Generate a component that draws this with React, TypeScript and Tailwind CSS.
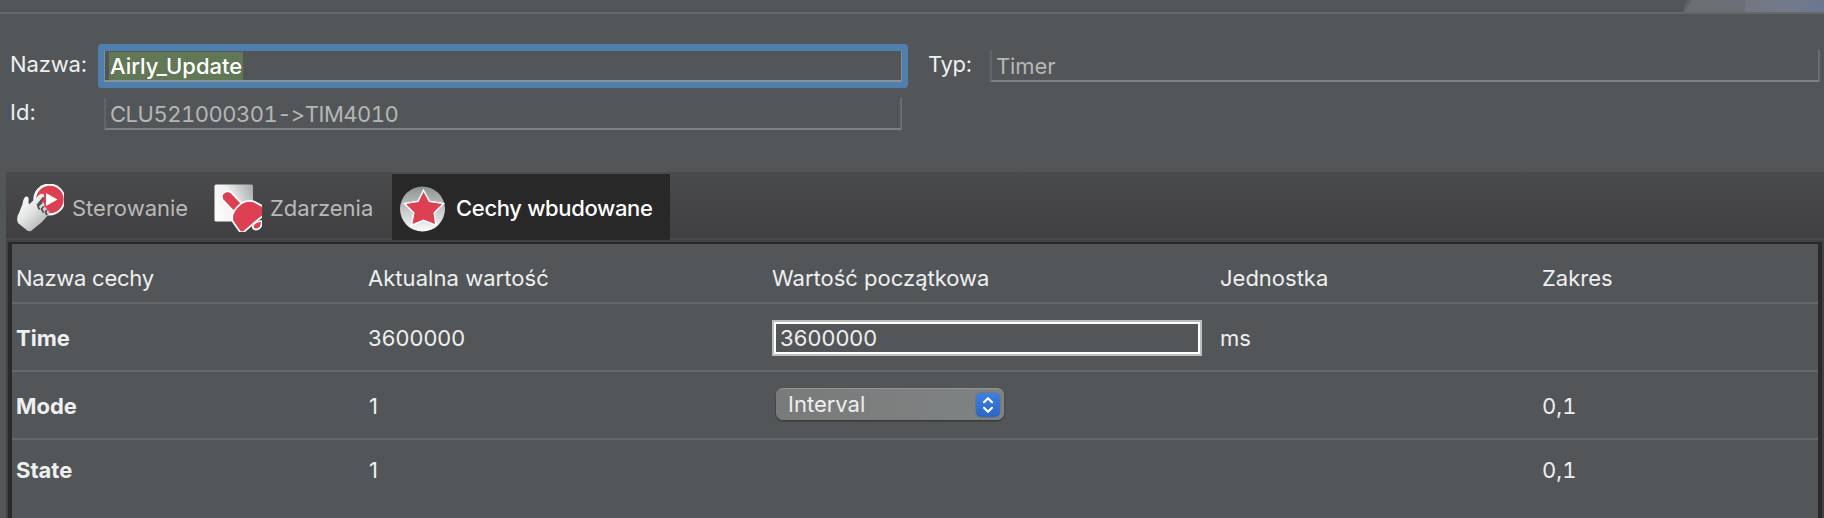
import React from "react";

function ControlIcon() {
  return (
    <svg width="52" height="52" viewBox="0 0 52 52" className="shrink-0">
      <defs>
        <linearGradient id="hand" x1="0" y1="0" x2="0.8" y2="1">
          <stop offset="0" stopColor="#ffffff" />
          <stop offset="0.5" stopColor="#e4e6e5" />
          <stop offset="1" stopColor="#a9adac" />
        </linearGradient>
        <clipPath id="controlClip">
          <rect x="0" y="2" width="50" height="50" />
        </clipPath>
      </defs>
      <g clipPath="url(#controlClip)">
        <circle cx="35.300" cy="17.500" r="16" fill="#fff" />
        <circle cx="35.800" cy="17.500" r="13.800" fill="#dc4052" />
        <path d="M32 11v13l11.500-6.500z" fill="#fff" />
        <path
          d="M3.500 34 L5 31 L8.500 22 Q9.500 15 12 14.500 Q15.500 14 14.500 20 L15 22.500 L25 13 Q28.500 10.500 30 13 Q30.500 14.500 28 17.500 L23.500 24 L27 21 Q29.500 19.500 30.500 22 L30 25 Q32.500 25 33 28 Q36 28.500 35 32 L28 40 L17 49 Q14 50 12 47.500 L4 41 Q2.500 38 3.500 34Z"
          fill="url(#hand)"
        />
        <path
          d="M29.500 15.500 L23 23.500 M28 20.500 L24 24.500 L25.500 27.500 M29.500 24.500 L27.500 27 L29.500 30.500 M32.500 28 L31.500 30.500 L33 33"
          stroke="#4d4f51"
          strokeWidth="1.700"
          fill="none"
        />
      </g>
    </svg>
  );
}

function EventIcon() {
  return (
    <svg width="52" height="52" viewBox="0 0 52 52" className="shrink-0">
      <defs>
        <linearGradient id="sheet" x1="0" y1="0.600" x2="1" y2="0.200">
          <stop offset="0" stopColor="#fbfbfb" />
          <stop offset="0.450" stopColor="#efefef" />
          <stop offset="1" stopColor="#abb0af" />
        </linearGradient>
        <clipPath id="eventClip">
          <rect x="0" y="2" width="50" height="48" />
        </clipPath>
      </defs>
      <g clipPath="url(#eventClip)">
        <rect x="2.500" y="2.500" width="38.500" height="37" rx="1.500" fill="url(#sheet)" />
        <g fill="#dc4052" stroke="#fff" strokeWidth="3.600" strokeLinejoin="round" paintOrder="stroke">
          <path d="M10.500 13.500 Q12 10.500 15.500 10 L18.500 11 L28.500 21.500 L21.500 28 L11 17Z" />
          <path d="M29.500 22.300 Q36 18.500 42 20.500 L52 26 L52 32 L43 39 L31 49.500 L28.500 49 L21.500 39 Q19 31 29.500 22.300Z" />
          <path d="M49 40 Q43.500 40 41.500 44.500 Q42 47 45 46.500 Q49 45 49 40Z" />
        </g>
      </g>
    </svg>
  );
}

function StarIcon() {
  return (
    <svg width="48" height="48" viewBox="0 0 48 48" className="shrink-0">
      <defs>
        <linearGradient id="disc" x1="0" y1="0" x2="0" y2="1">
          <stop offset="0" stopColor="#8d9392" />
          <stop offset="0.500" stopColor="#c3c6c5" />
          <stop offset="1" stopColor="#fbfbfb" />
        </linearGradient>
      </defs>
      <circle cx="24.500" cy="25" r="22.500" fill="url(#disc)" />
      <path
        d="M25.500 8 L31 18 L44 20 L35.500 28.500 L37 40 L25.500 35.500 L14.500 40 L16.500 28.500 L8 20 L20.500 18Z"
        fill="#dc4052"
        stroke="#fff"
        strokeWidth="3"
        paintOrder="stroke"
      />
    </svg>
  );
}

type TabProps = {
  label: string;
  icon: React.ReactNode;
  active?: boolean;
  className: string;
};

function Tab({ label, icon, active, className }: TabProps) {
  return (
    <button
      className={`flex items-start pt-[10px] ${className} ${
        active ? "bg-[#282828] font-medium tracking-[-0.34px] text-white" : "text-[#b9b9ba]"
      }`}
    >
      {icon}
      <span className={active ? "mt-[10px]" : "mt-[12px]"}>{label}</span>
    </button>
  );
}

type Row = {
  name: string;
  value: string;
  initial?: React.ReactNode;
  unit?: string;
  range?: string;
};

const rows: Row[] = [
  {
    name: "Time",
    value: "3600000",
    unit: "ms",
    initial: (
      <div className="-mt-1 h-9 w-[430px] border-2 border-[#bdbebe]">
        <div className="h-8 border-2 border-white pl-[4px] tracking-[0.1px]">3600000</div>
      </div>
    ),
  },
  {
    name: "Mode",
    value: "1",
    range: "0,1",
    initial: (
      <div className="-mt-1 ml-1 flex h-8 w-[228px] items-center justify-between rounded-[7px] border-t border-[#939595] bg-linear-to-r from-[#797b7b] to-[#808383] pr-1 pl-3 shadow-[0_1px_2px_rgba(0,0,0,0.45)]">
        <span className="-mt-px">Interval</span>
        <span className="flex size-6 items-center justify-center rounded-[5px] bg-linear-to-b from-[#3d7fe3] to-[#2c67c4] shadow-[0_0_2px_rgba(0,0,0,0.3)]">
          <svg width="12" height="18" viewBox="0 0 12 18" fill="none" stroke="#fff" strokeWidth="2.200" strokeLinecap="round" strokeLinejoin="round">
            <path d="M2 6.200 6 2.200l4 4M2 11.800l4 4 4-4" />
          </svg>
        </span>
      </div>
    ),
  },
  { name: "State", value: "1", range: "0,1" },
];

const columns = "grid grid-cols-[352px_404px_448px_322px_1fr] pl-1";

export default function App() {
  return (
    <div className="flex h-[518px] w-[1824px] flex-col overflow-hidden bg-[#525658] font-['Inter',sans-serif] text-[22px] leading-7 whitespace-nowrap text-[#eeefef] [font-feature-settings:'calt'_0]">
      <div className="flex h-[14px] shrink-0 justify-end border-b-2 border-[#656868]">
        <svg width="140" height="12" viewBox="0 0 140 12">
          <defs>
            <linearGradient id="sky" x1="0" y1="0" x2="1" y2="0">
              <stop offset="0" stopColor="#6b6f71" />
              <stop offset="0.430" stopColor="#6b6e76" />
              <stop offset="0.440" stopColor="#757780" />
              <stop offset="0.800" stopColor="#717a8c" />
              <stop offset="1" stopColor="#6b7690" />
            </linearGradient>
          </defs>
          <path d="M0 12V8L3 0h6v12z" fill="#606466" />
          <path d="M0 12 8 0h132v12z" fill="url(#sky)" />
        </svg>
      </div>

      <div className="grid shrink-0 grid-cols-[94px_798px_88px_830px] gap-y-4 pt-9 pl-[10px]">
        <label className="tracking-[-0.15px]">Nazwa:</label>
        <div className="h-8 rounded-[1px] border-t border-r border-b-2 border-l border-t-[#4f80ad] border-r-[#8a8c8d] border-b-[#8a9299] border-l-[#858c92] pl-[5px] text-white shadow-[0_0_0_6px_#4f80ad]">
          <span className="-ml-px mt-px inline-block h-7 bg-[#617756] px-px font-medium">Airly_Update</span>
        </div>
        <label className="pl-[26px] tracking-[-0.3px]">Typ:</label>
        <div className="h-8 border-r-2 border-b-2 border-l-2 border-r-[#6a6d6e] border-b-[#7e8182] border-l-[#626567] pt-[2px] pl-1 tracking-[-0.1px] text-[#b5b6b6]">
          Timer
        </div>
        <label>Id:</label>
        <div className="h-8 border-r-2 border-b-2 border-l-2 border-r-[#6a6d6e] border-b-[#7e8182] border-l-[#626567] pt-[2px] pl-1 tracking-[-0.5px] text-[#b5b6b6] [font-feature-settings:'calt'_0,'tnum'_1]">
          CLU521000301-&gt;TIM4010
        </div>
      </div>

      <div className="mt-[42px] ml-[6px] flex grow flex-col bg-[#414144]">
        <div className="flex h-[70px] shrink-0 bg-[linear-gradient(#4a4b4c_0,#403f42_66px,#4a494b_66px,#4a494b_68px,#414144_68px)]">
          <Tab label="Sterowanie" className="w-[198px] gap-[6px] pl-[8px]" icon={<ControlIcon />} />
          <Tab label="Zdarzenia" className="w-[188px] gap-[6px] pl-[8px]" icon={<EventIcon />} />
          <Tab label="Cechy wbudowane" active className="mt-[2px] h-[66px] w-[278px] gap-[10px] pl-[6px]" icon={<StarIcon />} />
        </div>
        <div className="mr-[2px] ml-[2px] grow border-x-4 border-t-2 border-[#292929] bg-[#525658]">
          <div className={`${columns} h-[60px] border-b-2 border-[#636768] pt-5`}>
            <span className="tracking-[-0.25px]">Nazwa cechy</span>
            <span className="tracking-[0.05px]">Aktualna wartość</span>
            <span>Wartość początkowa</span>
            <span>Jednostka</span>
            <span>Zakres</span>
          </div>
          {rows.map((row) => (
            <div
              key={row.name}
              className={`${columns} h-[68px] border-b-2 border-[#636768] pt-5 last:border-b-0 last:pt-4`}
            >
              <span className="font-bold">{row.name}</span>
              <span className={row.value.length > 1 ? "tracking-[0.1px]" : "pl-px"}>{row.value}</span>
              <div>{row.initial}</div>
              <span>{row.unit}</span>
              <span className="[font-feature-settings:'calt'_0,'tnum'_1]">{row.range}</span>
            </div>
          ))}
        </div>
      </div>
    </div>
  );
}
